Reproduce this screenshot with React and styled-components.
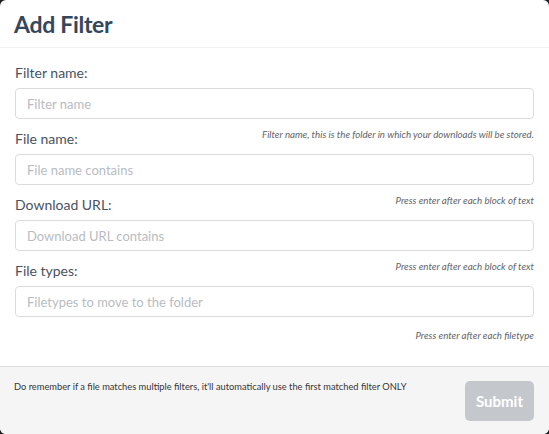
import styled, { createGlobalStyle } from "styled-components";

const GlobalStyle = createGlobalStyle`
  html, body {
    margin: 0;
    padding: 0;
    background: #1d1f21;
  }
  * {
    box-sizing: border-box;
  }
`;

const fields = [
  {
    label: "Filter name:",
    placeholder: "Filter name",
    hint: "Filter name, this is the folder in which your downloads will be stored.",
  },
  {
    label: "File name:",
    placeholder: "File name contains",
    hint: "Press enter after each block of text",
  },
  {
    label: "Download URL:",
    placeholder: "Download URL contains",
    hint: "Press enter after each block of text",
  },
  {
    label: "File types:",
    placeholder: "Filetypes to move to the folder",
    hint: "Press enter after each filetype",
  },
];

export default function App() {
  return (
    <>
      <GlobalStyle />
      <Card>
        <Header>
          <Title>Add Filter</Title>
        </Header>
        <Body>
          {fields.map((f, i) => (
            <div key={f.label}>
              <LabelRow first={i === 0}>
                <Label>{f.label}</Label>
                {i > 0 && <Hint>{fields[i - 1].hint}</Hint>}
              </LabelRow>
              <Input placeholder={f.placeholder} />
            </div>
          ))}
          <LastHint>{fields[fields.length - 1].hint}</LastHint>
        </Body>
        <Footer>
          <Note>
            Do remember if a file matches multiple filters, it'll automatically
            use the first matched filter ONLY
          </Note>
          <SubmitButton disabled>Submit</SubmitButton>
        </Footer>
      </Card>
    </>
  );
}

const Card = styled.div`
  width: 549px;
  height: 434px;
  display: flex;
  flex-direction: column;
  background: #ffffff;
  border-radius: 6px;
  overflow: hidden;
  font-family: Lato, "Open Sans", sans-serif;
`;

const Header = styled.div`
  height: 48px;
  padding: 0 14px;
  display: flex;
  align-items: center;
  border-bottom: 1px solid #f1f2f4;
`;

const Title = styled.h1`
  margin: 0;
  font-size: 23px;
  font-weight: 700;
  color: #34475c;
  letter-spacing: -0.3px;
`;

const Body = styled.div`
  flex: 1;
  padding: 14px 15px 0 15px;
`;

const LabelRow = styled.div`
  display: flex;
  justify-content: space-between;
  align-items: flex-start;
  margin-top: ${(props) => (props.first ? "0" : "9px")};
  margin-bottom: 5px;
`;

const Label = styled.label`
  padding-top: 1px;
  font-size: 14px;
  line-height: 20px;
  color: #4a5260;
`;

const Hint = styled.span`
  font-size: 9.7px;
  line-height: 12px;
  font-style: italic;
  color: #5f6368;
`;

const LastHint = styled(Hint)`
  display: block;
  margin-top: 12px;
  text-align: right;
`;

const Input = styled.input`
  display: block;
  width: 100%;
  height: 31px;
  padding: 0 11px;
  border: 1px solid #dbdbdb;
  border-radius: 4px;
  font-family: Lato, "Open Sans", sans-serif;
  font-size: 13px;
  color: #363636;
  outline: none;

  &::placeholder {
    color: #b8bcc2;
  }
`;

const Footer = styled.div`
  height: 68px;
  display: flex;
  justify-content: space-between;
  align-items: flex-start;
  padding: 14px 15px 0 14px;
  background: #f5f5f5;
  border-top: 1px solid #dbdbdb;
`;

const Note = styled.p`
  margin: 0;
  font-size: 9.3px;
  line-height: 12px;
  color: #363636;
`;

const SubmitButton = styled.button`
  width: 69px;
  height: 40px;
  border: none;
  border-radius: 5px;
  background: #c4c8cc;
  color: #ffffff;
  font-family: Lato, "Open Sans", sans-serif;
  font-size: 15px;
  font-weight: 700;
`;
